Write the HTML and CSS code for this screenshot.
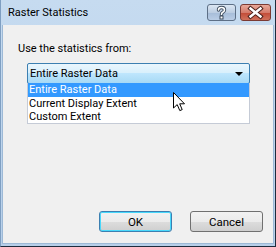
FILE: index.html
```html
<!DOCTYPE html>
<html lang="en">
<head>
    <meta charset="UTF-8">
    <title>Raster Statistics</title>
    <link rel="stylesheet" href="styles.css">
</head>
<body>

    <div class="window">
        <div class="titlebar">
            <span class="title">Raster Statistics</span>
            <div class="caption-buttons">
                <div class="cap-btn help">
                    <svg width="29" height="17" viewBox="0 0 29 17">
                        <path d="M11.5 6 Q11.5 3.5 14.5 3.5 Q17.5 3.5 17.5 6 Q17.5 7.5 15.5 8.5 Q14.5 9 14.5 10.5" fill="none" stroke="#3b4a5c" stroke-width="3.4" stroke-linecap="round"/>
                        <path d="M11.5 6 Q11.5 3.5 14.5 3.5 Q17.5 3.5 17.5 6 Q17.5 7.5 15.5 8.5 Q14.5 9 14.5 10.5" fill="none" stroke="#fff" stroke-width="1.6" stroke-linecap="round"/>
                        <rect x="13" y="12" width="3" height="3" fill="#fff" stroke="#3b4a5c" stroke-width="1"/>
                    </svg>
                </div>
                <div class="cap-btn close">
                    <svg width="31" height="17" viewBox="0 0 31 17">
                        <path d="M10.5 4.5 L20.5 12.5 M20.5 4.5 L10.5 12.5" stroke="#4a1f1a" stroke-width="4.4" stroke-linecap="square"/>
                        <path d="M10.5 4.5 L20.5 12.5 M20.5 4.5 L10.5 12.5" stroke="#fff" stroke-width="2.4" stroke-linecap="square"/>
                    </svg>
                </div>
            </div>
        </div>

        <div class="client">
            <p class="label">Use the statistics from:</p>

            <div class="combo">
                <div class="combo-box">
                    <span>Entire Raster Data</span>
                    <span class="arrow"></span>
                </div>
                <ul class="combo-list">
                    <li class="selected">Entire Raster Data</li>
                    <li>Current Display Extent</li>
                    <li>Custom Extent</li>
                </ul>
                <svg class="cursor" width="13" height="20" viewBox="0 0 13 20">
                    <path d="M0.5 0.5 L0.5 16 L4.2 12.6 L6.8 18.6 L9.2 17.6 L6.7 11.8 L11.5 11.8 Z" fill="#fff" stroke="#000" stroke-width="1" stroke-linejoin="miter"/>
                </svg>
            </div>

            <div class="buttons">
                <button class="btn default">OK</button>
                <button class="btn">Cancel</button>
            </div>
        </div>
    </div>

</body>
</html>
```

FILE: styles.css
```css
body {
    margin: 0;
    font-family: 'Roboto', 'Liberation Sans', sans-serif;
    font-size: 11px;
    color: #000;
}

.window {
    width: 276px;
    height: 247px;
    box-sizing: border-box;
    display: flex;
    flex-direction: column;
    background: linear-gradient(to bottom, #c6dbf0, #b7cfe9);
    border-left: 1px solid #7f9fc2;
    border-right: 1px solid #1d2c3d;
    border-bottom: 1px solid #1d2c3d;
    padding: 0 1px 2px 1px;
}

.titlebar {
    height: 25px;
    display: flex;
    justify-content: space-between;
    align-items: flex-start;
}

.title {
    margin: 6px 0 0 6px;
    font-size: 11px;
    color: #000;
}

.caption-buttons {
    display: flex;
    gap: 4px;
    margin: 4px 3px 0 0;
}

.cap-btn {
    height: 17px;
    box-sizing: border-box;
    border: 1px solid #5d6f86;
    border-radius: 3px;
    display: flex;
}

.cap-btn svg {
    margin: -1px;
}

.help {
    width: 29px;
    background: linear-gradient(to bottom, #dce7f3 0%, #bccde2 50%, #a6bcd8 51%, #b9cde6 100%);
}

.close {
    width: 31px;
    border-color: #7b3a33;
    background: linear-gradient(to bottom, #e9a99a 0%, #d47b6b 50%, #c24a36 51%, #d0725c 100%);
}

.client {
    flex: 1;
    background: #f0f0f0;
    border: 1px solid #9db9d6;
    border-top: none;
    display: flex;
    flex-direction: column;
    padding: 0 10px 11px 15px;
}

.label {
    margin: 17px 0 0 0;
    line-height: 14px;
}

.combo {
    position: relative;
    margin: 7px 0 0 9px;
    width: 223px;
}

.combo-box {
    height: 21px;
    box-sizing: border-box;
    border: 1px solid #3c7fb1;
    border-radius: 2px;
    background: linear-gradient(to bottom, #eaf6fd 0%, #d9f0fc 45%, #bee6fd 50%, #a7d9f5 100%);
    display: flex;
    align-items: center;
    justify-content: space-between;
    padding: 0 6px 0 2px;
}

.arrow {
    width: 0;
    height: 0;
    border-left: 4px solid transparent;
    border-right: 4px solid transparent;
    border-top: 4px solid #000;
}

.combo-list {
    position: absolute;
    left: 0;
    top: 20px;
    width: 223px;
    box-sizing: border-box;
    margin: 0;
    padding: 0;
    list-style: none;
    background: #fff;
    border: 1px solid #c5cbd6;
    border-top: none;
}

.combo-list li {
    height: 13px;
    line-height: 13px;
    padding-left: 1px;
}

.combo-list li.selected {
    height: 14px;
    line-height: 14px;
    background: #3399ff;
    color: #fff;
}

.cursor {
    position: absolute;
    left: 146px;
    top: 29px;
}

.buttons {
    margin-top: auto;
    display: flex;
    justify-content: flex-end;
    gap: 18px;
}

.btn {
    width: 73px;
    height: 21px;
    font-family: inherit;
    font-size: 11.5px;
    padding: 0;
    border: 1px solid #707070;
    border-radius: 3px;
    background: linear-gradient(to bottom, #f2f2f2 0%, #ebebeb 50%, #dddddd 51%, #cfcfcf 100%);
    color: #000;
}

.btn.default {
    border-color: #3c7fb1;
    box-shadow: inset 0 0 0 1px #48d8fb;
}
```
